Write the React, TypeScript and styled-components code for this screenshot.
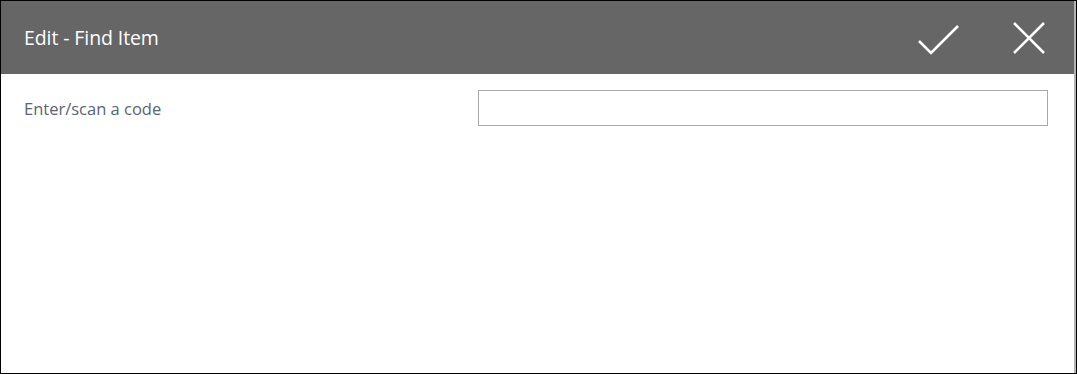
import styled, { createGlobalStyle } from "styled-components";

const GlobalStyle = createGlobalStyle`
  html, body {
    margin: 0;
    padding: 0;
    background: #ffffff;
  }
  * {
    box-sizing: border-box;
  }
`;

const Frame = styled.div`
  width: 1077px;
  height: 374px;
  border: 1px solid #000000;
  background: #ffffff;
  display: flex;
`;

const Dialog = styled.div`
  flex: 1;
  display: flex;
  flex-direction: column;
  border-right: 2px solid #b4b4b4;
  font-family: "Open Sans", "Noto Sans", sans-serif;
`;

const Header = styled.div`
  height: 73px;
  background: #666666;
  display: flex;
  align-items: center;
  padding-left: 23px;
  padding-right: 23px;
`;

const Title = styled.h1`
  flex: 1;
  margin: 0;
  font-size: 19.5px;
  font-weight: 400;
  color: #ffffff;
  letter-spacing: -0.1px;
`;

const IconButton = styled.button<{ $gap?: number }>`
  width: 44px;
  height: 44px;
  padding: 0;
  margin-left: ${(p) => p.$gap ?? 0}px;
  border: none;
  background: transparent;
  display: flex;
  align-items: center;
  justify-content: center;
  cursor: pointer;
`;

const Body = styled.div`
  padding: 16px 26px 0 23px;
`;

const FieldRow = styled.div`
  display: flex;
  align-items: center;
  justify-content: space-between;
`;

const Label = styled.label`
  font-size: 16.5px;
  color: #5b6373;
  letter-spacing: 0;
`;

const CodeInput = styled.input`
  width: 570px;
  height: 36px;
  border: 1px solid #a9a9a9;
  outline: none;
  padding: 0 8px;
  font-family: inherit;
  font-size: 15px;
`;

export default function App() {
  return (
    <>
      <GlobalStyle />
      <Frame>
        <Dialog>
          <Header>
            <Title>Edit - Find Item</Title>
            <IconButton aria-label="OK">
              <svg width="44" height="44" viewBox="0 0 44 44">
                <path
                  d="M3 25 L15 37 L42 10"
                  fill="none"
                  stroke="#ffffff"
                  strokeWidth="2.6"
                />
              </svg>
            </IconButton>
            <IconButton aria-label="Cancel" $gap={47}>
              <svg width="44" height="44" viewBox="0 0 44 44">
                <path
                  d="M7 7 L37 37 M37 7 L7 37"
                  fill="none"
                  stroke="#ffffff"
                  strokeWidth="2.6"
                />
              </svg>
            </IconButton>
          </Header>
          <Body>
            <FieldRow>
              <Label htmlFor="code">Enter/scan a code</Label>
              <CodeInput id="code" type="text" />
            </FieldRow>
          </Body>
        </Dialog>
      </Frame>
    </>
  );
}
